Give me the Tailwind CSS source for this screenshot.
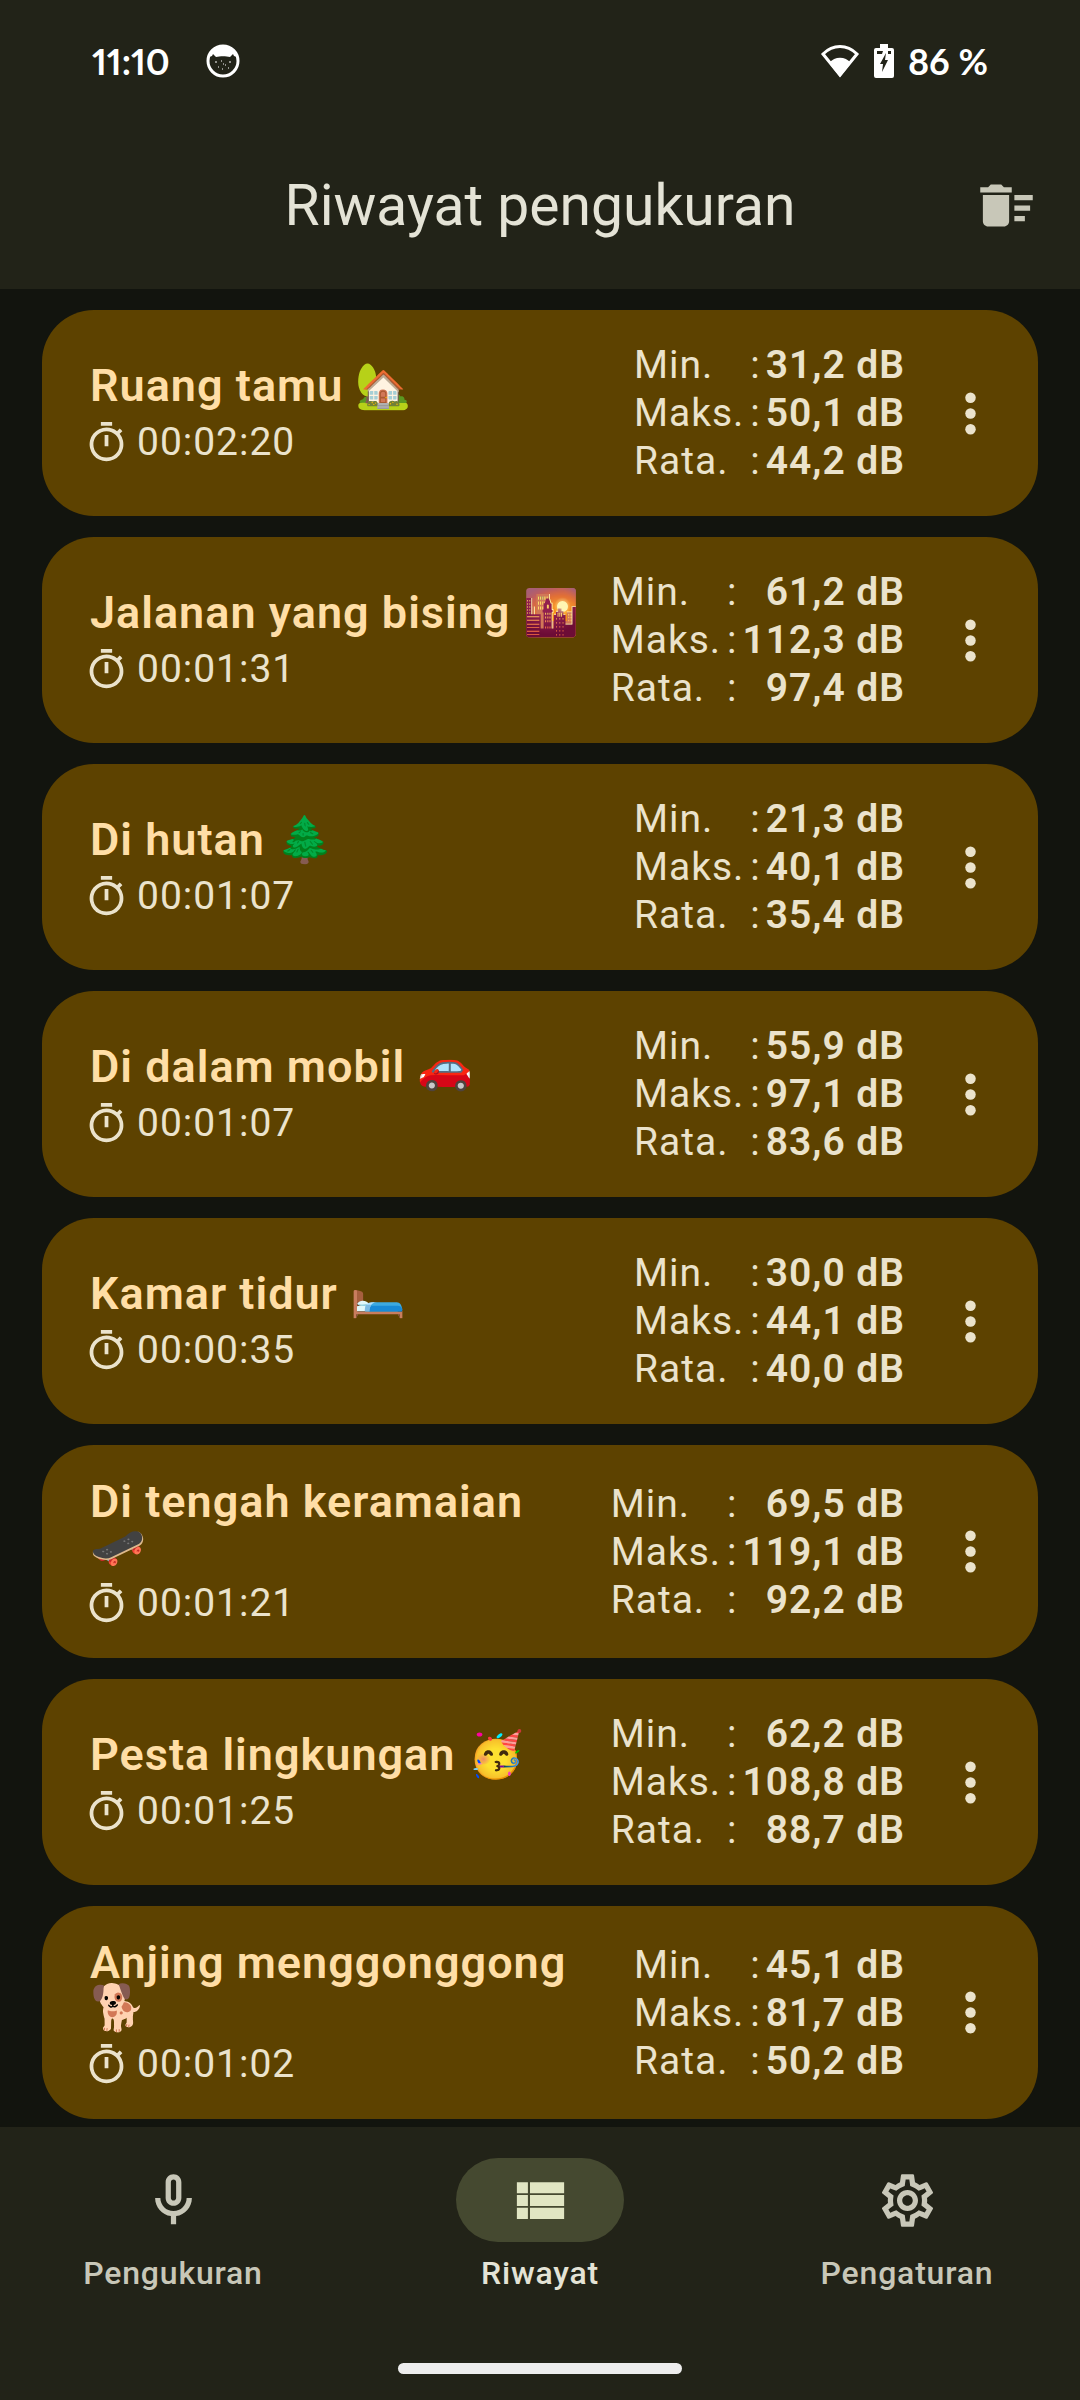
<!DOCTYPE html>
<html lang="id">
<head>
    <meta charset="UTF-8">
    <title>Riwayat pengukuran</title>
    <meta name="viewport" content="width=device-width, initial-scale=1.0">
    <script src="https://cdn.jsdelivr.net/npm/@tailwindcss/browser@4"></script>
</head>
<body class="bg-[#12140e] font-['Roboto',sans-serif] text-[#ebe3cc]">
    <div class="flex min-h-screen flex-col">
        <header class="bg-[#222318]">
            <!-- Status bar -->
            <div class="flex h-[121px] items-center justify-between px-[92px] font-['Lato',sans-serif] text-[36px] leading-[44px] font-bold text-white proportional-nums">
                <div class="flex items-center gap-[36px]">
                    <span>11:10</span>
                    <svg class="size-[34px]" viewBox="0 0 34 34" fill="none">
                        <circle cx="17" cy="17" r="15" stroke="currentColor" stroke-width="3"/>
                        <path d="M3 13C5 5 11 2 17 2s12 3 14 11l-3-1-1-2-3 3c-4-1-10-1-14 0L7 10l-1 2z" fill="currentColor"/>
                        <path d="M9 18h2M23 18h2M15 17h1M19 21h1M12 23h1M16 25h1M22 24h1M17 20h1" stroke="currentColor" stroke-width="1"/>
                    </svg>
                </div>
                <div class="flex items-center gap-[14px]">
                    <svg class="h-[34px] w-[40px]" viewBox="0 0 40 34" fill="none">
                        <path d="M3 10C13 0 27 0 37 10L20 31z" stroke="currentColor" stroke-width="3"/>
                        <path d="M9 19c6-7 16-7 22 0L20 33z" fill="currentColor"/>
                    </svg>
                    <svg class="h-[34px] w-[20px]" viewBox="0 0 20 34">
                        <path fill="currentColor" fill-rule="evenodd" d="M6 0h8v4h4a2 2 0 0 1 2 2v26a2 2 0 0 1-2 2H2a2 2 0 0 1-2-2V6a2 2 0 0 1 2-2h4zM3 7v3h5l1-3zM14 7v3h3V7zM12 9L6 20h3l-1 8 6-12h-3z"/>
                    </svg>
                    <span>86 %</span>
                </div>
            </div>
            <!-- App bar -->
            <div class="grid h-[168px] grid-cols-[1fr_auto_1fr] items-center px-[42px]">
                <h1 class="col-start-2 text-[57px] leading-[73px] text-[#e4e3d6]">Riwayat pengukuran</h1>
                <button type="button" aria-label="Hapus semua" class="justify-self-end text-[#c8c7b8]">
                    <svg class="size-[63px]" viewBox="0 0 24 24" fill="currentColor"><path d="M15 16h4v2h-4zM15 8h7v2h-7zM15 12h6v2h-6zM3 18c0 1.1.9 2 2 2h6c1.1 0 2-.9 2-2V8H3zM14 5h-3l-1-1H6L5 5H2v2h12z"/></svg>
                </button>
            </div>
        </header>

        <main class="flex-1 px-[42px] pt-[21px] pb-2">
            <ul id="history" class="flex flex-col gap-[21px]"></ul>
        </main>

        <nav class="bg-[#222318] pt-[31px] pb-[26px] text-[32px] leading-[42px] font-medium text-[#c8c7b8]">
            <div class="flex gap-[21px]">
                <a href="#pengukuran" class="flex flex-1 flex-col items-center gap-[10px]">
                    <span class="flex h-[84px] w-[168px] items-center justify-center rounded-full">
                        <svg class="size-[63px]" viewBox="0 0 24 24" fill="currentColor"><path d="M12 14c1.66 0 3-1.34 3-3V5c0-1.66-1.34-3-3-3S9 3.34 9 5v6c0 1.66 1.34 3 3 3zm-1-9c0-.55.45-1 1-1s1 .45 1 1v6c0 .55-.45 1-1 1s-1-.45-1-1V5zm6 6c0 2.76-2.24 5-5 5s-5-2.24-5-5H5c0 3.53 2.61 6.43 6 6.92V21h2v-3.08c3.39-.49 6-3.39 6-6.92h-2z"/></svg>
                    </span>
                    <span class="tracking-wide">Pengukuran</span>
                </a>
                <a href="#riwayat" aria-current="page" class="flex flex-1 flex-col items-center gap-[10px]">
                    <span class="flex h-[84px] w-[168px] items-center justify-center rounded-full bg-[#454930] text-[#e1e6c3]">
                        <svg class="size-[63px]" viewBox="0 0 24 24" fill="currentColor"><path d="M3 5h4.2v4.2H3zM8 5h13v4.2H8zM3 9.9h4.2v4.2H3zM8 9.9h13v4.2H8zM3 14.8h4.2V19H3zM8 14.8h13V19H8z"/></svg>
                    </span>
                    <span class="tracking-wide text-[#e4e3d6]">Riwayat</span>
                </a>
                <a href="#pengaturan" class="flex flex-1 flex-col items-center gap-[10px]">
                    <span class="flex h-[84px] w-[168px] items-center justify-center rounded-full">
                        <svg class="size-[63px]" viewBox="0 0 24 24" fill="currentColor"><path d="M19.43 12.98c.04-.32.07-.64.07-.98 0-.34-.03-.66-.07-.98l2.11-1.65c.19-.15.24-.42.12-.64l-2-3.46c-.09-.16-.26-.25-.44-.25-.06 0-.12.01-.17.03l-2.49 1c-.52-.4-1.08-.73-1.69-.98l-.38-2.65C14.46 2.18 14.25 2 14 2h-4c-.25 0-.46.18-.49.42l-.38 2.65c-.61.25-1.17.59-1.69.98l-2.49-1c-.06-.02-.12-.03-.18-.03-.17 0-.34.09-.43.25l-2 3.46c-.13.22-.07.49.12.64l2.11 1.65c-.04.32-.07.65-.07.98 0 .33.03.66.07.98l-2.11 1.65c-.19.15-.24.42-.12.64l2 3.46c.09.16.26.25.44.25.06 0 .12-.01.17-.03l2.49-1c.52.4 1.08.73 1.69.98l.38 2.65c.03.24.24.42.49.42h4c.25 0 .46-.18.49-.42l.38-2.65c.61-.25 1.17-.59 1.69-.98l2.49 1c.06.02.12.03.18.03.17 0 .34-.09.43-.25l2-3.46c.12-.22.07-.49-.12-.64l-2.11-1.65zm-1.98-1.71c.04.31.05.52.05.73 0 .21-.02.43-.05.73l-.14 1.13.89.7 1.08.84-.7 1.21-1.27-.51-1.04-.42-.9.68c-.43.32-.84.56-1.25.73l-1.06.43-.16 1.13-.2 1.35h-1.4l-.19-1.35-.16-1.13-1.06-.43c-.43-.18-.83-.41-1.23-.71l-.91-.7-1.06.43-1.27.51-.7-1.21 1.08-.84.89-.7-.14-1.13c-.03-.31-.05-.54-.05-.74s.02-.43.05-.73l.14-1.13-.89-.7-1.08-.84.7-1.21 1.27.51 1.04.42.9-.68c.43-.32.84-.56 1.25-.73l1.06-.43.16-1.13.2-1.35h1.39l.19 1.35.16 1.13 1.06.43c.43.18.83.41 1.23.71l.91.7 1.06-.43 1.27-.51.7 1.21-1.07.85-.89.7.14 1.13zM12 8c-2.21 0-4 1.79-4 4s1.79 4 4 4 4-1.79 4-4-1.79-4-4-4zm0 6c-1.1 0-2-.9-2-2s.9-2 2-2 2 .9 2 2-.9 2-2 2z"/></svg>
                    </span>
                    <span class="tracking-wide">Pengaturan</span>
                </a>
            </div>
            <div class="mx-auto mt-[69px] h-[11px] w-[284px] rounded-full bg-[#ededed]"></div>
        </nav>
    </div>

    <script>
        const measurements = [
            { name: "Ruang tamu 🏡", time: "00:02:20", min: "31,2", max: "50,1", avg: "44,2" },
            { name: "Jalanan yang bising 🌇", time: "00:01:31", min: "61,2", max: "112,3", avg: "97,4" },
            { name: "Di hutan 🌲", time: "00:01:07", min: "21,3", max: "40,1", avg: "35,4" },
            { name: "Di dalam mobil 🚗", time: "00:01:07", min: "55,9", max: "97,1", avg: "83,6" },
            { name: "Kamar tidur 🛏️", time: "00:00:35", min: "30,0", max: "44,1", avg: "40,0" },
            { name: "Di tengah keramaian 🛹", time: "00:01:21", min: "69,5", max: "119,1", avg: "92,2" },
            { name: "Pesta lingkungan 🥳", time: "00:01:25", min: "62,2", max: "108,8", avg: "88,7" },
            { name: "Anjing menggonggong 🐕", time: "00:01:02", min: "45,1", max: "81,7", avg: "50,2" },
        ];

        function row(label, value) {
            return `
                <dt class="flex justify-between gap-[6px]"><span>${label}</span><span>:</span></dt>
                <dd class="text-right font-semibold">${value} dB</dd>`;
        }

        document.getElementById("history").innerHTML = measurements.map((m) => `
            <li class="flex items-center rounded-[52px] bg-[#5d4200] py-[31px] pl-[42px]">
                <div class="flex-1 pt-[3px]">
                    <h2 class="mb-[10px] pl-[6px] text-[45px] leading-[45px] font-semibold tracking-[1px] text-[#ffdea6]">${m.name}</h2>
                    <p class="flex items-center gap-2 text-[39px] leading-[48px] tracking-wide">
                        <svg class="size-[45px]" viewBox="0 0 24 24" fill="currentColor"><path d="M9 1h6v2H9zM11 8h2v6h-2zM19.03 7.39l1.42-1.42c-.43-.51-.9-.99-1.41-1.41l-1.42 1.42A8.96 8.96 0 0 0 12 4a9 9 0 1 0 7.03 3.39zM12 20a7 7 0 1 1 0-14 7 7 0 0 1 0 14z"/></svg>
                        <span>${m.time}</span>
                    </p>
                </div>
                <dl class="ml-[20px] grid grid-cols-[auto_auto] gap-x-[5px] text-[39px] leading-[48px] tracking-wide">
                    ${row("Min.", m.min)}
                    ${row("Maks.", m.max)}
                    ${row("Rata.", m.avg)}
                </dl>
                <button type="button" aria-label="Opsi lainnya" class="mr-[5px] ml-[2px] flex size-[126px] items-center justify-center">
                    <svg class="size-[63px]" viewBox="0 0 24 24" fill="currentColor"><circle cx="12" cy="6" r="2"/><circle cx="12" cy="12" r="2"/><circle cx="12" cy="18" r="2"/></svg>
                </button>
            </li>`).join("");
    </script>
</body>
</html>
